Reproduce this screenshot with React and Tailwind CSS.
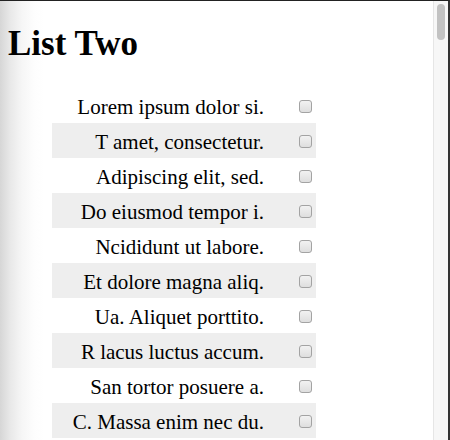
import React from "react";

const items = [
  "Lorem ipsum dolor si.",
  "T amet, consectetur.",
  "Adipiscing elit, sed.",
  "Do eiusmod tempor i.",
  "Ncididunt ut labore.",
  "Et dolore magna aliq.",
  "Ua. Aliquet porttito.",
  "R lacus luctus accum.",
  "San tortor posuere a.",
  "C. Massa enim nec du.",
];

export default function App() {
  return (
    <div className="w-[450px] h-[440px] overflow-hidden flex border-t border-[#222222] border-r-2 border-r-[#333333] bg-white">
      <div
        className="flex-1 h-full overflow-hidden bg-[linear-gradient(to_right,#d6d6d6_0px,#e8e8e8_10px,#f6f6f6_22px,#fdfdfd_34px,#ffffff_44px)]"
        style={{ fontFamily: '"Liberation Serif", "Times New Roman", serif' }}
      >
        <h1 className="mt-[24px] mb-[25px] pl-2 text-[35px] leading-[38px] font-bold text-black">
          List Two
        </h1>
        <ul className="ml-[52px] w-[264px]">
          {items.map((t, i) => (
            <li
              key={i}
              className={`flex h-[35px] ${i % 2 === 1 ? "bg-[#eeeeee]" : ""}`}
            >
              <span className="flex-1 text-right pt-2 text-[21px] leading-[22px] text-black whitespace-nowrap">
                {t}
              </span>
              <span className="w-[52px] flex justify-end pr-1">
                <input
                  type="checkbox"
                  className="appearance-none mt-3 w-[13px] h-[13px] rounded-[3px] border border-[#a3a3a3] bg-[linear-gradient(to_bottom,#f2f2f2,#dedede)]"
                />
              </span>
            </li>
          ))}
        </ul>
      </div>
      <div className="w-[15px] h-full bg-[#f7f7f7] border-l border-[#e6e6e6] flex justify-center pt-[3px]">
        <div className="w-[8px] h-[36px] rounded-full bg-[#c2c2c2]" />
      </div>
    </div>
  );
}
